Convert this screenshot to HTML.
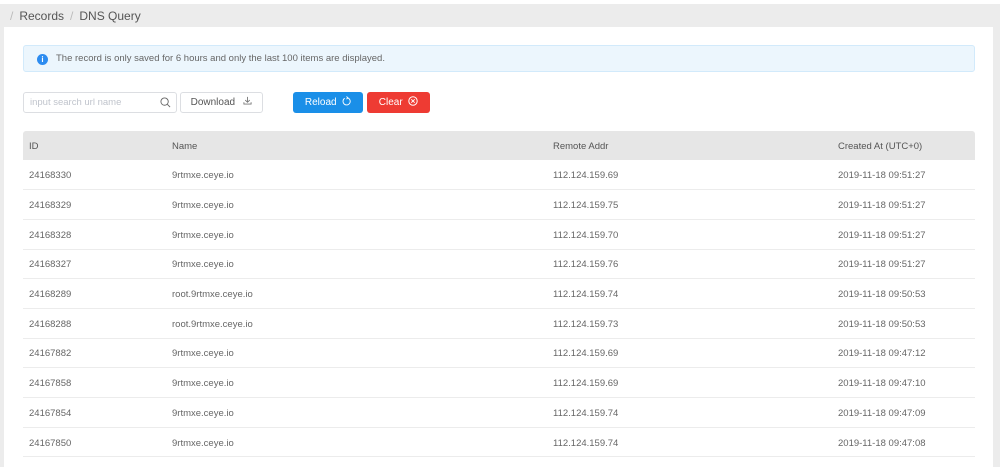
<!DOCTYPE html>
<html><head><style>
*{box-sizing:border-box;margin:0;padding:0}
body{width:1000px;height:466px;overflow:hidden;background:#ececec;font-family:"Liberation Sans",Arial,sans-serif;position:relative}
.top{position:absolute;left:0;top:0;width:1000px;height:4px;background:#fff}
.bc{position:absolute;left:10px;top:9px;font-size:12px;color:#555}
.bc .s{color:#bbb;margin:0 6px}
.card{position:absolute;left:4px;top:27px;width:989px;height:440px;background:#fff}
.alert{position:absolute;left:19px;top:18px;width:952px;height:27px;background:#ecf6fd;border:1px solid #d2eafb;border-radius:3px;font-size:9.5px;color:#666;line-height:26px;padding-left:32px}
.alert i{position:absolute;left:13px;top:8px;width:11px;height:11px;border-radius:50%;background:#2d8cf0;color:#fff;font-style:normal;font-size:8px;line-height:11px;text-align:center;font-weight:bold}
.inp{position:absolute;left:19px;top:65px;width:154px;height:21px;border:1px solid #dcdee2;border-radius:3px;font-size:9.5px;color:#c0c4cc;line-height:19px;padding-left:6px}
.btn{position:absolute;top:65px;height:21px;border-radius:3px;font-size:10px;line-height:22px;text-align:center}
.dl{left:176px;width:83px;border:1px solid #dcdee2;color:#555;line-height:20px}
.rl{left:289px;width:70px;background:#1a8fe8;color:#fff}
.cl{left:363px;width:63px;background:#ee3b33;color:#fff}
table{position:absolute;left:19px;top:104px;width:952px;border-collapse:collapse;font-size:9.5px;color:#666}
th{background:#e6e6e6;height:29px;text-align:left;font-weight:normal;color:#555;padding-left:6px;padding-top:1px}
th:first-child{border-radius:3px 0 0 0}th:last-child{border-radius:0 3px 0 0}
td{height:29.7px;border-bottom:1px solid #ececec;padding-left:6px;padding-top:2px}
</style></head><body>
<div class="top"></div>
<div class="bc"><span class="s" style="margin-left:0">/</span>Records<span class="s">/</span>DNS Query</div>
<div class="card">
<div class="alert"><i>i</i>The record is only saved for 6 hours and only the last 100 items are displayed.</div>
<div class="inp">input search url name
<svg style="position:absolute;right:5px;top:4px" width="11" height="11" viewBox="0 0 12 12"><circle cx="5" cy="5" r="4" fill="none" stroke="#666" stroke-width="1"/><path d="M8 8l3 3" stroke="#666"/></svg></div>
<div class="btn dl">Download&nbsp;&nbsp;&nbsp;<svg width="9" height="9" viewBox="0 0 10 10"><path d="M5 1v6M2.5 4.5L5 7l2.5-2.5M1 7v2h8V7" fill="none" stroke="#777"/></svg></div>
<div class="btn rl">Reload&nbsp;&nbsp;<svg width="9" height="10" viewBox="0 0 10 10" style="vertical-align:-1px"><path d="M6 1.5A4 4 0 1 1 3 2" fill="none" stroke="#fff"/><path d="M5 0l1.5 1.5L5 3" fill="none" stroke="#fff"/></svg></div>
<div class="btn cl">Clear&nbsp;&nbsp;<svg width="10" height="10" viewBox="0 0 10 10" style="vertical-align:-1px"><circle cx="5" cy="5" r="4.2" fill="none" stroke="#fff"/><path d="M3.3 3.3l3.4 3.4M6.7 3.3l-3.4 3.4" stroke="#fff"/></svg></div>
<table>
<tr><th style="width:143px">ID</th><th style="width:381px">Name</th><th style="width:285px">Remote Addr</th><th>Created At (UTC+0)</th></tr>
<tr><td>24168330</td><td>9rtmxe.ceye.io</td><td>112.124.159.69</td><td>2019-11-18 09:51:27</td></tr>
<tr><td>24168329</td><td>9rtmxe.ceye.io</td><td>112.124.159.75</td><td>2019-11-18 09:51:27</td></tr>
<tr><td>24168328</td><td>9rtmxe.ceye.io</td><td>112.124.159.70</td><td>2019-11-18 09:51:27</td></tr>
<tr><td>24168327</td><td>9rtmxe.ceye.io</td><td>112.124.159.76</td><td>2019-11-18 09:51:27</td></tr>
<tr><td>24168289</td><td>root.9rtmxe.ceye.io</td><td>112.124.159.74</td><td>2019-11-18 09:50:53</td></tr>
<tr><td>24168288</td><td>root.9rtmxe.ceye.io</td><td>112.124.159.73</td><td>2019-11-18 09:50:53</td></tr>
<tr><td>24167882</td><td>9rtmxe.ceye.io</td><td>112.124.159.69</td><td>2019-11-18 09:47:12</td></tr>
<tr><td>24167858</td><td>9rtmxe.ceye.io</td><td>112.124.159.69</td><td>2019-11-18 09:47:10</td></tr>
<tr><td>24167854</td><td>9rtmxe.ceye.io</td><td>112.124.159.74</td><td>2019-11-18 09:47:09</td></tr>
<tr><td>24167850</td><td>9rtmxe.ceye.io</td><td>112.124.159.74</td><td>2019-11-18 09:47:08</td></tr>
</table>
</div>
</body></html>
